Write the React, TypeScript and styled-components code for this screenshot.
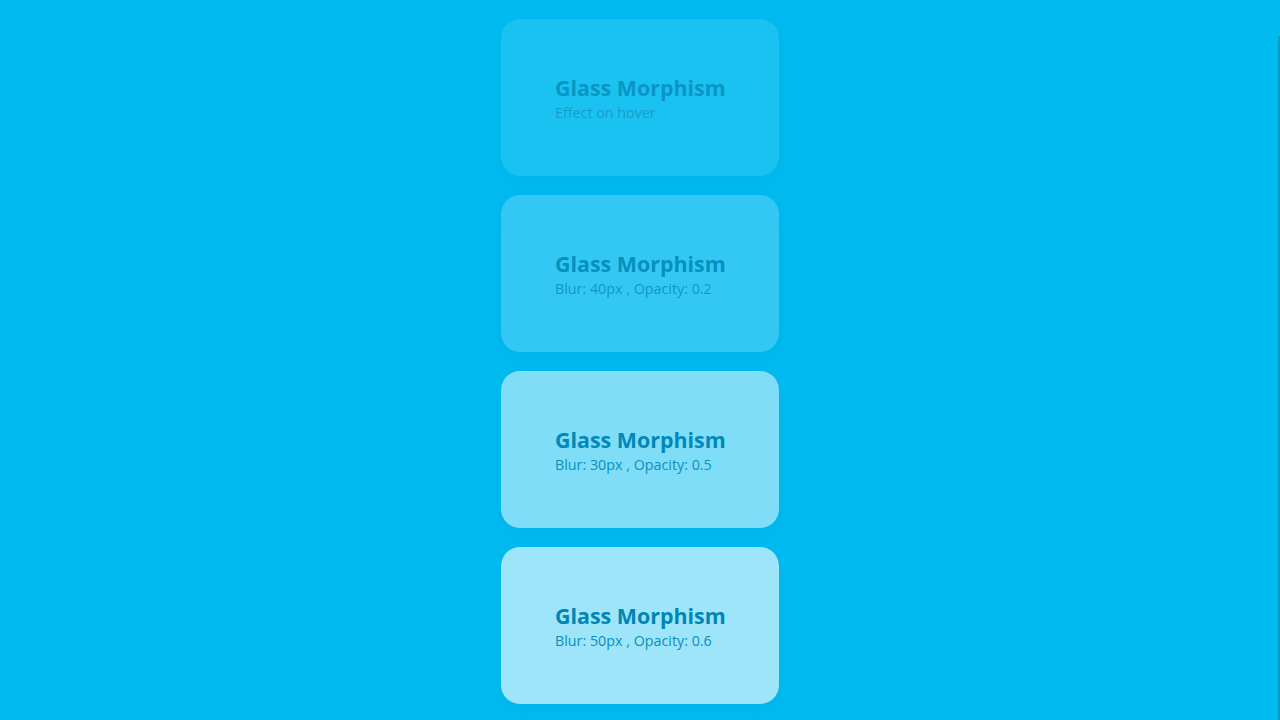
import React from 'react';
import styled, { createGlobalStyle } from 'styled-components';

const GlobalStyle = createGlobalStyle`
  html, body {
    margin: 0;
    padding: 0;
    background: #00bbf0;
    font-family: "Open Sans", "Noto Sans", sans-serif;
    overflow: hidden;
  }
`;

const Page = styled.div`
  width: 100vw;
  height: 100vh;
  display: flex;
  flex-direction: column;
  align-items: center;
  gap: 19px;
  padding-top: 19px;
  box-sizing: border-box;
  background: #00bbf0;
`;

const Card = styled.div<{ $alpha: number }>`
  width: 278px;
  height: 157px;
  flex-shrink: 0;
  box-sizing: border-box;
  padding-left: 54px;
  padding-top: 2px;
  border-radius: 19px;
  background: rgba(255, 255, 255, ${(p) => p.$alpha});
  box-shadow: 0 4px 18px rgba(0, 90, 140, 0.08);
  display: flex;
  flex-direction: column;
  justify-content: center;
`;

const Title = styled.h2<{ $color: string }>`
  margin: 0;
  font-size: 21.4px;
  font-weight: 700;
  line-height: 26px;
  color: ${(p) => p.$color};
`;

const Sub = styled.p<{ $color: string }>`
  margin: 2px 0 0;
  font-size: 14.3px;
  line-height: 20px;
  color: ${(p) => p.$color};
`;

const ScrollEdge = styled.div`
  position: fixed;
  right: 0;
  top: 36px;
  bottom: 0;
  width: 2px;
  background: #0898c4;
`;

const cards = [
  { alpha: 0.1, sub: 'Effect on hover', title: '#0b95c4', text: '#1a9ccb' },
  { alpha: 0.2, sub: 'Blur: 40px , Opacity: 0.2', title: '#0690c0', text: '#1296c6' },
  { alpha: 0.5, sub: 'Blur: 30px , Opacity: 0.5', title: '#0088b8', text: '#0a90c0' },
  { alpha: 0.62, sub: 'Blur: 50px , Opacity: 0.6', title: '#0086b6', text: '#0a8ebe' },
];

export default function App() {
  return (
    <>
      <GlobalStyle />
      <Page>
        {cards.map((c, i) => (
          <Card key={i} $alpha={c.alpha}>
            <Title $color={c.title}>Glass Morphism</Title>
            <Sub $color={c.text}>{c.sub}</Sub>
          </Card>
        ))}
      </Page>
      <ScrollEdge />
    </>
  );
}
